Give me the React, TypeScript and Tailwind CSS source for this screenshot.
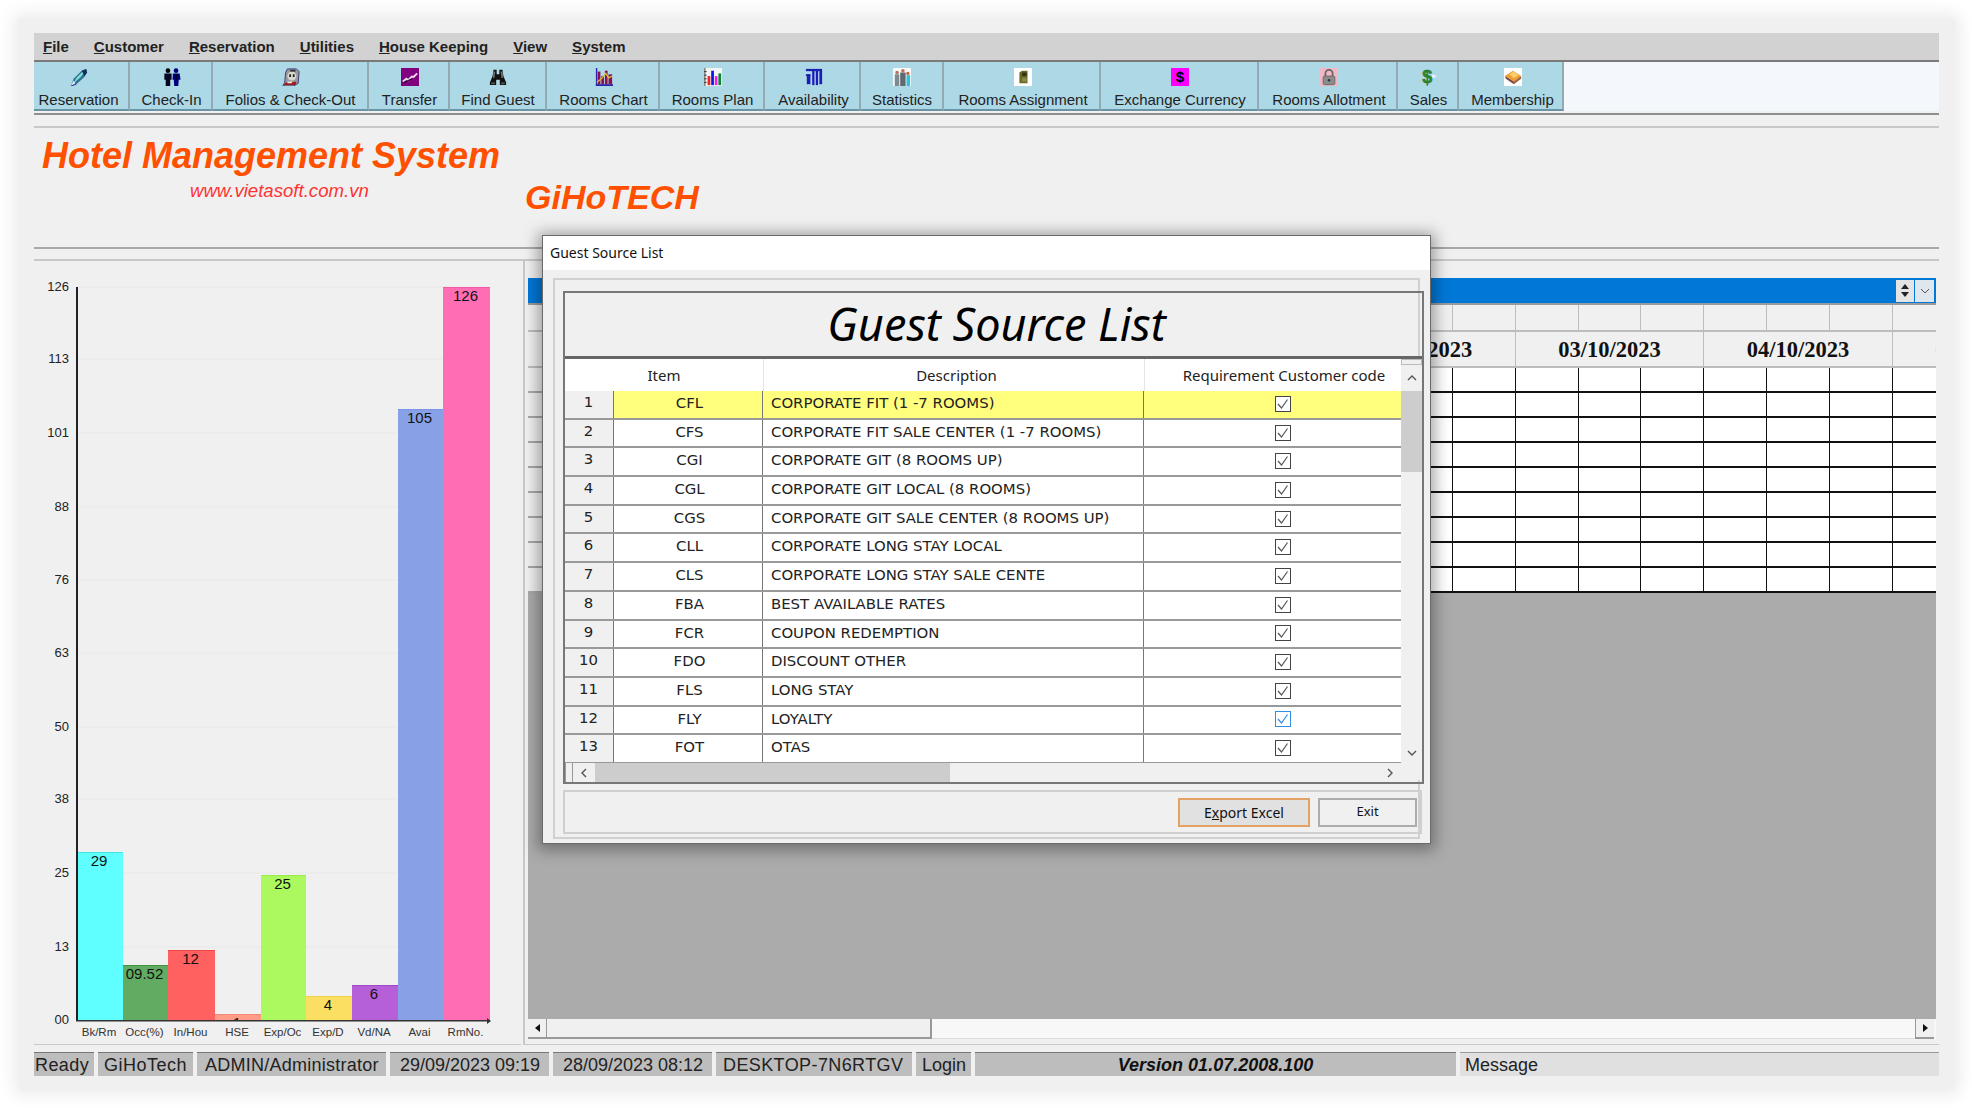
import React from "react"

const sans = "font-['Liberation_Sans',Arial,sans-serif]"
const ui = "font-['Noto_Sans',Tahoma,sans-serif]"
const cellFont = "font-['DejaVu_Sans',Tahoma,sans-serif]"

const IconPen = () => (
  <svg viewBox="0 0 20 20" className="size-5">
    <path d="M1 20 L4 12 L13 3 L18 1 L19 5 L16 10 L7 18 Z" fill="#2f6f8f" />
    <path d="M4 17 L7 11 L14 4 L17 3 L12 10 Z" fill="#7fe0d8" />
    <path d="M1 20 L4 14 L6 17 Z" fill="#eef" />
    <path d="M13 3 L18 1 L19 5 L16 9 Z" fill="#12305a" />
    <path d="M1 20 L7 18" stroke="#2a2ab0" strokeWidth="1" />
  </svg>
)

const IconPeople = () => (
  <svg viewBox="0 0 20 20" className="size-5">
    <circle cx="5.5" cy="3" r="2.6" fill="#000" />
    <path d="M1.5 6 H9.5 V13 H8 V20 H3 V13 H1.5 Z" fill="#050520" />
    <circle cx="14.5" cy="3" r="2.6" fill="#00007a" />
    <path d="M11 6 H18.5 L19.5 13 H17.5 L17 20 H12.5 L12 13 H10.5 Z" fill="#00007a" />
    <path d="M13.5 7 H15.5 L15 13 H14 Z" fill="#000" />
  </svg>
)

const IconFolio = () => (
  <svg viewBox="0 0 20 20" className="size-5">
    <path d="M6 1 H16 L19 4 L18 17 L13 20 H1 L3 16 L4 5 Z" fill="#9a9a9a" stroke="#33337a" strokeWidth="1" />
    <circle cx="11" cy="9" r="5" fill="#d8d8d0" />
    <rect x="8" y="7" width="2" height="3" fill="#222" />
    <rect x="12" y="7" width="2" height="3" fill="#222" />
    <rect x="9" y="2" width="6" height="2" fill="#333" />
    <path d="M2 19 C3 15 8 15 10 16 L16 15 L15 19 Z" fill="#a01818" />
    <rect x="6" y="15" width="5" height="2" fill="#e8e8e8" />
  </svg>
)

const IconTransfer = () => (
  <svg viewBox="0 0 20 20" className="size-5">
    <rect width="20" height="20" fill="#800080" />
    <path d="M2 15 L6 12 L8 13.5 L12 9.5 L14 10 L18 6" stroke="#e8d8e8" strokeWidth="2.2" fill="none" />
    <path d="M3 16.5 L7 14.5 L12 12" stroke="#2a002a" strokeWidth="1.2" fill="none" />
  </svg>
)

const IconBinoculars = () => (
  <svg viewBox="0 0 20 20" className="size-5">
    <path d="M5 2 H8.5 V7 H11.5 V2 H15 L16 9 L19 16 V19 H12 V13 H8 V19 H1 V16 L4 9 Z" fill="#111" />
    <path d="M5 4 H7 L6 11 H4.5 Z M13 4 H15 L15.5 11 H14 Z" fill="#777" />
    <rect x="2.5" y="16" width="4" height="2" fill="#555" />
    <rect x="13.5" y="16" width="4" height="2" fill="#555" />
  </svg>
)

const IconChart = () => (
  <svg viewBox="0 0 20 20" className="size-5">
    <rect x="1" y="0" width="1.5" height="20" fill="#2222aa" />
    <rect x="1" y="18" width="19" height="2" fill="#2222aa" />
    <rect x="3" y="4" width="3" height="14" fill="#8a1050" />
    <rect x="7" y="9" width="3" height="9" fill="#8a1050" />
    <rect x="11" y="3" width="3" height="15" fill="#8a1050" />
    <rect x="15" y="7" width="4" height="11" fill="#8a1050" />
    <path d="M2 16 L8 11 L12 6 L15 11 L19 9" stroke="#d8c030" strokeWidth="1.4" fill="none" />
  </svg>
)

const IconPlan = () => (
  <svg viewBox="0 0 20 20" className="size-5">
    <rect width="20" height="20" fill="#f4f4f4" />
    <path d="M1 0 V20 M0 4 H3 M0 8 H3 M0 12 H3 M0 16 H3" stroke="#333" strokeWidth="1" />
    <rect x="4" y="9" width="3" height="10" fill="#ee2020" />
    <rect x="8" y="3" width="3" height="16" fill="#1010ee" />
    <rect x="12" y="9" width="3" height="10" fill="#ee20ee" />
    <rect x="16" y="6" width="3" height="13" fill="#108030" />
  </svg>
)

const IconAvailability = () => (
  <svg viewBox="0 0 20 20" className="size-5">
    <rect x="1" y="1" width="18" height="2.5" fill="#2020b0" />
    <rect x="1" y="7" width="5" height="2" fill="#2020b0" />
    <rect x="2" y="7" width="4" height="11" fill="#1c1cb8" />
    <rect x="8" y="3" width="2.5" height="16" fill="#1c1cb8" />
    <rect x="12" y="3" width="2.5" height="16" fill="#1c1cb8" />
    <rect x="16" y="3" width="3" height="15" fill="#1c1cb8" />
  </svg>
)

const IconStatistics = () => (
  <svg viewBox="0 0 20 20" className="size-5">
    <rect width="20" height="20" fill="#f8f8f8" />
    <circle cx="4.5" cy="5" r="2" fill="#b07860" />
    <rect x="2" y="7" width="5" height="13" fill="#808890" />
    <circle cx="11" cy="3" r="2" fill="#c07050" />
    <rect x="8" y="5" width="6" height="15" fill="#606870" />
    <circle cx="16.5" cy="6" r="1.8" fill="#c06040" />
    <rect x="15" y="8" width="4" height="12" fill="#30c0d8" />
  </svg>
)

const IconAssignment = () => (
  <svg viewBox="0 0 20 20" className="size-5">
    <rect width="20" height="20" fill="#fff" />
    <path d="M6 5 L9 3 H15 V17 H6 Z" fill="#6a6a28" />
    <rect x="9" y="5" width="5" height="4" fill="#34341a" />
    <rect x="9" y="11" width="5" height="4" fill="#8c8c48" />
  </svg>
)

const IconExchange = () => (
  <svg viewBox="0 0 20 20" className="size-5">
    <rect width="20" height="20" fill="#ff00ff" />
    <text x="10" y="16" textAnchor="middle" fontSize="17" fontWeight="700" fill="#000" fontFamily="Liberation Sans">$</text>
  </svg>
)

const IconLock = () => (
  <svg viewBox="0 0 20 20" className="size-5">
    <rect width="20" height="20" fill="#f4b8c4" />
    <path d="M6 9 V6 a4 4 0 0 1 8 0 V9" stroke="#666" strokeWidth="2" fill="none" />
    <rect x="3.5" y="9" width="13" height="9.5" rx="1.5" fill="#8c8c8c" stroke="#666" />
    <circle cx="10" cy="13.5" r="1.4" fill="#333" />
  </svg>
)

const IconSales = () => (
  <svg viewBox="0 0 20 20" className="size-5">
    <path d="M13 7 L19 9 L14 12 Z" fill="#e8f4f4" />
    <text x="8" y="17" textAnchor="middle" fontSize="20" fontWeight="700" fill="#2f8a2f" stroke="#1e6a1e" strokeWidth="0.5" fontFamily="Liberation Sans">$</text>
  </svg>
)

const IconBook = () => (
  <svg viewBox="0 0 20 20" className="size-5">
    <rect width="20" height="20" fill="#fff" />
    <path d="M1 9 L10 3 L19 9 L11 15 Z" fill="#f0a030" />
    <path d="M6 7 L11 4 L16 8 L11 11 Z" fill="#f8d070" />
    <path d="M1 9 L11 15 V18 L2 12 Z" fill="#7a4a40" />
    <path d="M11 15 L19 9 V12 L11 18 Z" fill="#a06040" />
  </svg>
)

const toolbar = [
  { label: "Reservation", w: "w-[96px] pr-[5px]", icon: <IconPen /> },
  { label: "Check-In", w: "w-[83px] pl-[2px]", icon: <IconPeople /> },
  { label: "Folios & Check-Out", w: "w-[156px] pl-[1px]", icon: <IconFolio /> },
  { label: "Transfer", w: "w-[81px] pl-[2px]", icon: <IconTransfer /> },
  { label: "Find Guest", w: "w-[97px] pl-[1px]", icon: <IconBinoculars /> },
  { label: "Rooms Chart", w: "w-[113px] pl-[2px]", icon: <IconChart /> },
  { label: "Rooms Plan", w: "w-[105px] pl-[2px]", icon: <IconPlan /> },
  { label: "Availability", w: "w-[96px] pl-[3px]", icon: <IconAvailability /> },
  { label: "Statistics", w: "w-[83px] pl-[1px]", icon: <IconStatistics /> },
  { label: "Rooms Assignment", w: "w-[157px] pl-[3px]", icon: <IconAssignment /> },
  { label: "Exchange Currency", w: "w-[158px] pl-[2px]", icon: <IconExchange /> },
  { label: "Rooms Allotment", w: "w-[139px] pl-[3px]", icon: <IconLock /> },
  { label: "Sales", w: "w-[61px] pl-[2px]", icon: <IconSales /> },
  { label: "Membership", w: "w-[105px] pl-[4px]", icon: <IconBook /> },
]

const menus = [
  ["F", "ile"],
  ["C", "ustomer"],
  ["R", "eservation"],
  ["U", "tilities"],
  ["H", "ouse Keeping"],
  ["V", "iew"],
  ["S", "ystem"],
]

const rows = [
  ["CFL", "CORPORATE FIT (1 -7 ROOMS)"],
  ["CFS", "CORPORATE FIT SALE CENTER (1 -7 ROOMS)"],
  ["CGI", "CORPORATE GIT (8 ROOMS UP)"],
  ["CGL", "CORPORATE GIT LOCAL (8 ROOMS)"],
  ["CGS", "CORPORATE GIT SALE CENTER (8 ROOMS UP)"],
  ["CLL", "CORPORATE LONG STAY LOCAL"],
  ["CLS", "CORPORATE LONG STAY SALE CENTE"],
  ["FBA", "BEST AVAILABLE RATES"],
  ["FCR", "COUPON REDEMPTION"],
  ["FDO", "DISCOUNT OTHER"],
  ["FLS", "LONG STAY"],
  ["FLY", "LOYALTY"],
  ["FOT", "OTAS"],
]

const bars = [
  { x: 77, r: 123, top: 852, fill: "#5fffff", line: "#3fe8e8", label: "Bk/Rm", value: "29" },
  { x: 123, r: 168, top: 965, fill: "#62ab62", line: "#3d963d", label: "Occ(%)", value: "09.52" },
  { x: 168, r: 215, top: 950, fill: "#ff6060", line: "#f04545", label: "In/Hou", value: "12" },
  { x: 215, r: 261, top: 1014, fill: "#ff9c88", line: "#f48a76", label: "HSE", value: "1" },
  { x: 261, r: 306, top: 875, fill: "#abf85f", line: "#98ea48", label: "Exp/Oc", value: "25" },
  { x: 306, r: 352, top: 996, fill: "#fbdf62", line: "#f0d040", label: "Exp/D", value: "4" },
  { x: 352, r: 398, top: 985, fill: "#b55fd8", line: "#a048c8", label: "Vd/NA", value: "6" },
  { x: 398, r: 443, top: 409, fill: "#88a1e6", line: "#7a94e8", label: "Avai", value: "105" },
  { x: 443, r: 490, top: 287, fill: "#ff6db5", line: "#f55ca8", label: "RmNo.", value: "126" },
]

const ticks = [
  ["126", 287],
  ["113", 359],
  ["101", 433],
  ["88", 507],
  ["76", 580],
  ["63", 653],
  ["50", 727],
  ["38", 799],
  ["25", 873],
  ["13", 947],
  ["00", 1020],
] as const

function Chart() {
  return (
    <svg viewBox="34 262 487 783" className="mt-[1px] h-[783px] w-[487px]" fontFamily="Liberation Sans">
      <defs>
        <clipPath id="plot">
          <rect x="76" y="262" width="420" height="758" />
        </clipPath>
      </defs>
      {ticks.map(([t, y]) => (
        <g key={t}>
          <line x1="78" x2="490" y1={y} y2={y} stroke="#e8e8e8" />
          <text x="69" y={y + 4} textAnchor="end" fontSize="13" fill="#222">{t}</text>
        </g>
      ))}
      {bars.map((b) => (
        <g key={b.label}>
          <rect x={b.x} y={b.top} width={b.r - b.x} height={1020 - b.top} fill={b.fill} />
          <rect x={b.x} y={b.top} width={b.r - b.x} height="1" fill={b.line} />
          <text x={(b.x + b.r) / 2 - 1} y={b.top + 14} textAnchor="middle" fontSize="15" fill="#111" clipPath="url(#plot)">{b.value}</text>
          <text x={(b.x + b.r) / 2 - 1} y="1036" textAnchor="middle" fontSize="11.5" fill="#333">{b.label}</text>
        </g>
      ))}
      <rect x="76" y="287" width="2" height="734" fill="#222" />
      <rect x="76" y="1020" width="414" height="1.5" fill="#333" />
      <path d="M487 1018 L491 1021 L487 1024 Z" fill="#333" />
    </svg>
  )
}

const dates = ["", "", "", "", "02/10/2023", "03/10/2023", "04/10/2023", "05/10/2023"]

function Grid() {
  const cells = Array.from({ length: 23 })
  return (
    <div className="h-[290px] w-full overflow-hidden bg-white">
      <div className="flex h-[27px] w-[1500px] border-t-2 border-[#9a9a9a] bg-[#f0f0f0]">
        <div className="w-[45px] shrink-0 border-r border-[#bdbdbd]" />
        {cells.map((_, i) => (
          <div key={i} className="w-[62.85px] shrink-0 border-r border-[#bdbdbd]" />
        ))}
      </div>
      <div className="flex h-[38px] w-[1700px] border-y-2 border-[#bdbdbd] bg-[#f0f0f0]">
        <div className="w-[45px] shrink-0 border-r border-[#bdbdbd]" />
        {dates.map((d, i) => (
          <div
            key={i}
            className={`flex w-[188.55px] shrink-0 items-center justify-center border-r border-[#bdbdbd] pt-[2px] font-['Liberation_Serif',serif] text-[22.5px] font-bold ${
              i === 7 ? "text-[#ffa500]" : "text-[#111]"
            }`}
          >
            {d}
          </div>
        ))}
      </div>
      {Array.from({ length: 9 }).map((_, r) => (
        <div key={r} className="flex h-[25px] w-[1500px]">
          <div className="w-[45px] shrink-0 border-b-2 border-r border-[#a8a8a8] bg-[#f0f0f0]" />
          {cells.map((_, i) => (
            <div key={i} className="w-[62.85px] shrink-0 border-b-2 border-r border-[#111]" />
          ))}
        </div>
      ))}
    </div>
  )
}

function Check({ blue }: { blue?: boolean }) {
  const c = blue ? "#2f8fe8" : "#444"
  return (
    <svg viewBox="0 0 16 16" className="size-4">
      <rect x="0.5" y="0.5" width="15" height="15" fill="#fff" stroke={c} />
      <path d="M3 8 L6.5 12 L12.5 3.5" fill="none" stroke={blue ? "#2f8fe8" : "#555"} strokeWidth="1.2" />
    </svg>
  )
}

function GuestDialog() {
  return (
    <div className={`absolute left-[508px] top-[202px] h-[609px] w-[889px] border border-[#6a6a6a] bg-[#f0f0f0] shadow-[0_2px_14px_4px_rgba(0,0,0,0.35)] ${ui}`}>
      <div className="flex h-[34px] items-center bg-white pb-[2px] pl-[7px] text-[14px] text-[#111]">Guest Source List</div>
      <div className="mx-[10px] mt-[8px] h-[561px] border-2 border-[#d0d0d0] px-[8px] pt-[11px]">
        <div className="h-[493px] w-[861px] border-2 border-[#777]">
          <div className="flex h-[66px] items-center justify-center border-b-[3px] border-[#666] pb-[3px] pl-[6px] text-[45px] italic leading-none text-black">
            Guest Source List
          </div>
          <div className="flex h-[421px]">
            <div className="h-full w-[836px] overflow-hidden bg-white text-[#222]">
              <div className="flex h-[32px] items-center text-[15px]">
                <div className="w-[198px] text-center">Item</div>
                <div className="w-[381px] border-l border-[#e4e4e4] pl-[5px] text-center leading-[32px]">Description</div>
                <div className="w-[257px] whitespace-nowrap border-l border-[#e4e4e4] pl-[22px] text-center leading-[32px]">Requirement Customer code</div>
              </div>
              {rows.map(([code, desc], i) => (
                <div key={code} className={`flex h-[28.7px] border-b-2 border-[#999] text-[14.9px] ${cellFont} ${i === 0 ? "bg-[#ffff7d]" : ""}`}>
                  <div className="w-[49px] border-r border-[#777] bg-[#f0f0f0] pr-[1px] text-center leading-[22px]">{i + 1}</div>
                  <div className="w-[149px] border-r border-[#777] pl-[3px] text-center leading-[25px]">{code}</div>
                  <div className="w-[381px] truncate border-r border-[#777] pl-[8px] leading-[25px]">{desc}</div>
                  <div className="flex w-[257px] items-center justify-center pb-[1px] pl-[20px]">
                    <Check blue={i === 11} />
                  </div>
                </div>
              ))}
            </div>
            <div className="flex h-full w-[21px] flex-col items-center bg-[#f0f0f0]">
              <div className="h-[6px] w-full border border-[#bbb]" />
              <div className="flex h-[26px] items-center text-[#555]">
                <svg viewBox="0 0 10 6" className="h-[6px] w-[10px]"><path d="M1 5 L5 1 L9 5" fill="none" stroke="#555" strokeWidth="1.4" /></svg>
              </div>
              <div className="h-[81px] w-full bg-[#cdcdcd]" />
              <div className="flex-1" />
              <div className="mb-[24px]">
                <svg viewBox="0 0 10 6" className="h-[6px] w-[10px]"><path d="M1 1 L5 5 L9 1" fill="none" stroke="#555" strokeWidth="1.4" /></svg>
              </div>
            </div>
          </div>
        </div>
        <div className="relative -mt-[21px] ml-[2px] flex h-[19px] w-[836px] items-center">
          <div className="h-full w-[8px] border-x border-[#999] bg-[#f0f0f0]" />
          <div className="flex h-full w-[22px] items-center justify-center bg-[#f0f0f0]">
            <svg viewBox="0 0 6 10" className="h-[10px] w-[6px]"><path d="M5 1 L1 5 L5 9" fill="none" stroke="#555" strokeWidth="1.4" /></svg>
          </div>
          <div className="h-full w-[355px] bg-[#cdcdcd]" />
          <div className="h-full flex-1 bg-[#f0f0f0]" />
          <div className="flex h-full w-[22px] items-center justify-center bg-[#f0f0f0]">
            <svg viewBox="0 0 6 10" className="h-[10px] w-[6px]"><path d="M1 1 L5 5 L1 9" fill="none" stroke="#555" strokeWidth="1.4" /></svg>
          </div>
        </div>
        <div className="mt-[8px] flex h-[44px] w-[859px] items-center justify-end gap-[8px] border-2 border-[#cfcfcf] pr-[3px] text-[14px] text-[#111]">
          <div className="flex h-[29px] w-[132px] items-center justify-center border-2 border-[#e3a263] bg-[#e1e1e1]">
            <span>E<u>x</u>port Excel</span>
          </div>
          <div className="flex h-[29px] w-[99px] items-center justify-center border-2 border-[#adadad] bg-[#f0f0f0] text-[13px]">Exit</div>
        </div>
      </div>
    </div>
  )
}

const statusCells = [
  { text: "Ready", w: "w-[60px]", extra: "pl-[1px] tracking-[0.4px]" },
  { text: "GiHoTech", w: "w-[95px]", extra: "pl-[6px] tracking-[0.5px]" },
  { text: "ADMIN/Administrator", w: "w-[189px]", extra: "pl-[8px] tracking-[0.25px]" },
  { text: "29/09/2023 09:19", w: "w-[159px]", extra: "pl-[10px]" },
  { text: "28/09/2023 08:12", w: "w-[159px]", extra: "pl-[10px]" },
  { text: "DESKTOP-7N6RTGV", w: "w-[196px]", extra: "pl-[7px] tracking-[0.4px]" },
  { text: "Login", w: "w-[55px]", extra: "pl-[6px]" },
]

export default function App() {
  return (
    <div className={`h-[1108px] w-[1972px] overflow-hidden bg-white pl-[18px] pt-[18px] ${sans}`}>
      <div className="h-[1072px] w-[1937px] rounded-sm bg-[#f0f0f0] pl-[16px] pt-[15px] shadow-[0_0_16px_6px_rgba(0,0,0,0.07)]">
        <div className="relative h-[1043px] w-[1905px]">
          <div className="flex h-[29px] items-center gap-[25px] border-b-2 border-[#7a7a7a] bg-[#d2d2d2] pb-[1px] pl-[9px] text-[15px] font-bold leading-none text-[#222]">
            {menus.map(([a, b]) => (
              <span key={a + b} className="whitespace-nowrap">
                <u>{a}</u>
                {b}
              </span>
            ))}
          </div>
          <div className="flex h-[49px] bg-[#f4f8fc]">
            {toolbar.map((t) => (
              <div key={t.label} className={`flex ${t.w} shrink-0 flex-col items-center border-b-2 border-r-2 border-b-[#6a93a6] border-r-[#93aab4] bg-[#add8e6] pt-[6px] text-[15px] leading-[18px] text-[#222]`}>
                {t.icon}
                <span className="mt-[5px] whitespace-nowrap">{t.label}</span>
              </div>
            ))}
          </div>
          <div className="h-[4px] border-b-2 border-[#8f8f8f]" />
          <div className="h-[11px]" />
          <div className="flex h-[123px] items-start border-y-2 border-t-[#c8c8c8] border-b-[#a8a8a8] pl-[8px]">
            <div className="w-[483px] shrink-0">
              <div className="mt-[8px] whitespace-nowrap text-[36px] font-bold italic leading-[40px] text-[#ff5000]">Hotel Management System</div>
              <div className="mt-[5px] pl-[148px] text-[18.6px] italic leading-[20px] text-[#ff3333]">www.vietasoft.com.vn</div>
            </div>
            <div className="mt-[49px] text-[34px] font-bold italic leading-[40px] text-[#ff5000]">GiHoTECH</div>
          </div>
          <div className="h-[10px]" />
          <div className="flex h-[786px] border-t-2 border-[#c8c8c8]">
            <div className="w-[487px] shrink-0 border-b border-[#c8c8c8]">
              <Chart />
            </div>
            <div className="ml-[2px] flex flex-1 flex-col border-b border-l-2 border-[#c8c8c8] pl-[3px]">
              <div className="mt-[17px] flex h-[25px] w-[1408px] items-center justify-end bg-[#0078d7] pr-[2px]">
                <div className="flex h-[22px] w-[18px] flex-col items-center justify-center gap-[3px] bg-[#e4e4e4]">
                  <svg viewBox="0 0 8 5" className="h-[5px] w-[8px]"><path d="M4 0 L8 5 H0 Z" fill="#222" /></svg>
                  <svg viewBox="0 0 8 5" className="h-[5px] w-[8px]"><path d="M0 0 H8 L4 5 Z" fill="#222" /></svg>
                </div>
                <div className="ml-[1px] flex h-[22px] w-[19px] items-center justify-center bg-[#dfe6ee]">
                  <svg viewBox="0 0 10 6" className="h-[6px] w-[10px]"><path d="M1 1 L5 5 L9 1" fill="none" stroke="#555" /></svg>
                </div>
              </div>
              <div className="w-[1408px]"><Grid /></div>
              <div className="h-[426px] w-[1408px] bg-[#ababab]" />
              <div className="flex h-[20px] w-[1408px] items-stretch bg-[#f8f8f8] pr-[2px]">
                <div className="flex w-[19px] items-center justify-center border-b-2 border-r border-[#999] bg-[#f0f0f0]">
                  <svg viewBox="0 0 5 8" className="h-[8px] w-[5px]"><path d="M5 0 V8 L0 4 Z" fill="#111" /></svg>
                </div>
                <div className="w-[385px] border-b-2 border-r-2 border-[#999] bg-[#f0f0f0]" />
                <div className="flex-1 border-b border-[#dcdcdc]" />
                <div className="flex w-[19px] items-center justify-center border-b-2 border-l border-[#999] bg-[#f0f0f0]">
                  <svg viewBox="0 0 5 8" className="h-[8px] w-[5px]"><path d="M0 0 L5 4 L0 8 Z" fill="#111" /></svg>
                </div>
              </div>
            </div>
          </div>
          <div className="h-[7px]" />
          <div className="flex h-[24px] gap-[4px] text-[18px] leading-[24px] text-[#222]">
            {statusCells.map((c) => (
              <div key={c.text} className={`${c.w} ${c.extra} shrink-0 whitespace-nowrap border-t border-[#777] bg-[#bdbdbd]`}>
                {c.text}
              </div>
            ))}
            <div className="w-[481px] shrink-0 whitespace-nowrap border-t border-[#777] bg-[#bdbdbd] text-center font-bold italic text-[#111]">
              Version 01.07.2008.100
            </div>
            <div className="flex-1 border-t border-[#999] bg-[#e0e0e0] pl-[5px]">Message</div>
          </div>
          <GuestDialog />
        </div>
      </div>
    </div>
  )
}
